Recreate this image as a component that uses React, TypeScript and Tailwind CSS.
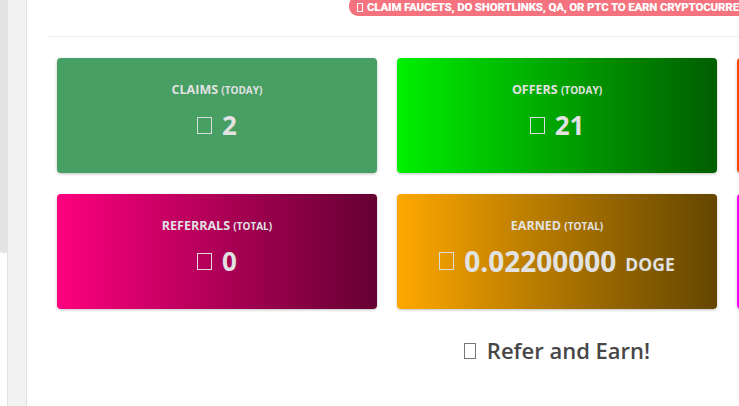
import React from 'react';

const Tofu = ({ className = '' }: { className?: string }) => (
  <span className={`inline-block border ${className}`} />
);

type Stat = {
  label: string;
  sub: string;
  value: string;
  unit?: string;
  bg: string;
};

const stats: Stat[] = [
  { label: 'CLAIMS', sub: '(TODAY)', value: '2', bg: 'bg-[#479f63]' },
  { label: 'OFFERS', sub: '(TODAY)', value: '21', bg: 'bg-linear-to-r from-[#00f000] to-[#005e00]' },
  { label: 'SHORTLINKS', sub: '(TODAY)', value: '0', bg: 'bg-[#ff4500]' },
  { label: 'REFERRALS', sub: '(TOTAL)', value: '0', bg: 'bg-linear-to-r from-[#ff007f] to-[#650032]' },
  { label: 'EARNED', sub: '(TOTAL)', value: '0.02200000', unit: 'DOGE', bg: 'bg-linear-to-r from-[#ffa800] to-[#644600]' },
  { label: 'BALANCE', sub: '(NOW)', value: '0', bg: 'bg-[#ff00ff]' },
];

const StatCard = ({ stat }: { stat: Stat }) => (
  <div className={`h-[115px] rounded-[4px] shadow-[0_1px_3px_rgba(0,0,0,0.25)] ${stat.bg} flex flex-col items-center text-[#e2e2e2]`}>
    <div className="mt-[23px] text-[12.5px] font-bold leading-[18px] whitespace-nowrap">
      {stat.label} <span className="text-[10px]">{stat.sub}</span>
    </div>
    <div className="mt-[9px] flex items-center gap-[10px]">
      <Tofu className={stat.unit ? 'w-[15px] h-[18px] border-[#dcdcdc]' : 'w-[15px] h-[17px] border-[#dcdcdc]'} />
      <span className={`${stat.unit ? 'text-[28px]' : 'text-[26px]'} font-bold leading-[34px]`}>{stat.value}</span>
      {stat.unit && <span className="text-[17.5px] font-bold mt-[6px] -ml-[1px]">{stat.unit}</span>}
    </div>
  </div>
);

export default function App() {
  return (
    <div className="h-[406px] w-[739px] overflow-hidden bg-white flex font-['Open_Sans',sans-serif]">
      {/* scrollbar */}
      <div className="w-[7px] shrink-0">
        <div className="h-[253px] bg-[#e3e3e3] rounded-b-[2px]" />
      </div>
      {/* sidebar edge */}
      <div className="w-[20px] shrink-0 bg-[#f2f2f2] border-x border-[#e2e2e2]" />

      <main className="flex-1 min-w-0 pl-[20px]">
        <div className="relative h-[37px] border-b border-[#ececec] w-[1100px]">
          <div className="absolute left-[302px] -top-[4px] h-[20px] pl-[8px] pr-4 rounded-[9px] bg-[#f4737f] text-white text-[11.5px] font-black font-['Roboto',sans-serif] leading-[22px] whitespace-nowrap tracking-[-0.2px]">
            <Tofu className="w-[6px] h-[9px] mr-[4px] align-[-1px] border-white" />
            CLAIM FAUCETS, DO SHORTLINKS, QA, OR PTC TO EARN CRYPTOCURRENCY
          </div>
        </div>

        <div className="w-[1020px] px-[10px] pt-[21px]">
          <div className="grid grid-cols-[320px_320px_320px] gap-x-[20px] gap-y-[21px]">
            {stats.map((s, i) => (
              <StatCard key={i} stat={s} />
            ))}
          </div>

          <h3 className="mt-[25px] text-center text-[22px] font-semibold text-[#474747] flex items-center justify-center gap-[11px]">
            <Tofu className="w-[12px] h-[16px] border-[#777]" />
            Refer and Earn!
          </h3>
        </div>
      </main>
    </div>
  );
}
